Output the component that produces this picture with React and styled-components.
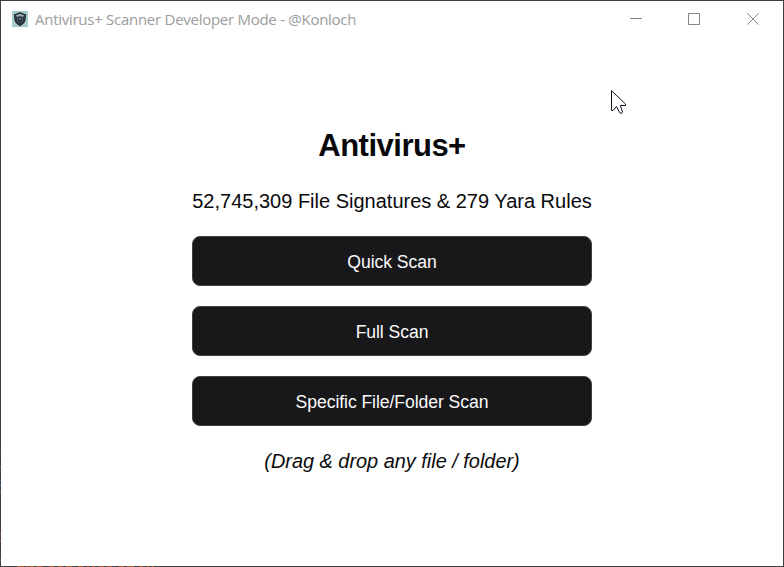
import React from "react";
import styled, { createGlobalStyle } from "styled-components";

const GlobalStyle = createGlobalStyle`
  * { box-sizing: border-box; }
  body { margin: 0; background: #fff; overflow: hidden; }
`;

const Window = styled.div`
  position: relative;
  display: flex;
  flex-direction: column;
  width: 784px;
  height: 567px;
  border: 1px solid #3f3f41;
  background: #fff;
  color: #09090b;
  font-family: "Liberation Sans", Arial, sans-serif;
`;

const TitleBar = styled.header`
  display: flex;
  align-items: center;
  height: 36px;
  padding: 0 1px 0 11px;
  flex: none;
`;

const WindowTitle = styled.span`
  margin-left: 7px;
  flex: 1;
  font: 400 15px/20px "Open Sans", sans-serif;
  letter-spacing: -0.27px;
  color: #9c9c9c;
  white-space: nowrap;
`;

const WindowControl = styled.button`
  display: grid;
  place-items: center;
  width: 58.5px;
  height: 36px;
  padding: 0;
  border: 0;
  background: transparent;
`;

const Content = styled.main`
  display: flex;
  flex-direction: column;
  align-items: center;
  width: 400px;
  margin: 89px auto 0;
`;

const Heading = styled.h1`
  margin: 0;
  font-size: 31px;
  letter-spacing: -0.5px;
  line-height: 40px;
  white-space: nowrap;
`;

const Summary = styled.p`
  margin: 22px 0;
  font-size: 20px;
  line-height: 26px;
  white-space: nowrap;
`;

const Actions = styled.div`
  display: grid;
  gap: 20px;
  width: 100%;
`;

const ScanButton = styled.button`
  height: 50px;
  padding: 1px 0 0;
  border: 1px solid #414143;
  border-radius: 8px;
  background: #18181b;
  color: #fafafa;
  font: 17.6px/20px "Liberation Sans", Arial, sans-serif;
  letter-spacing: -0.07px;
`;

const DropHint = styled.p`
  margin: 22px 0 0;
  font-size: 19.9px;
  font-style: italic;
  line-height: 26px;
  white-space: nowrap;
`;

const Pointer = styled.svg`
  position: absolute;
  left: 610px;
  top: 89px;
`;

const EdgeGlints = styled.svg`
  position: absolute;
  left: -1px;
  top: -1px;
  pointer-events: none;
`;

const blueGlints = [[455, 1], [466, 2], [480, 1], [485, 2], [491, 2]];
const redGlints = [[17, 7], [26, 2], [29, 5], [36, 7], [49, 5], [58, 5], [66, 6], [78, 5], [87, 2], [92, 3], [99, 5], [107, 5], [119, 5], [127, 7], [139, 4], [147, 2], [152, 2]];

function ShieldIcon() {
  return (
    <svg width="16" height="16" viewBox="0 0 16 16">
      <rect width="16" height="16" fill="#a5cccd" />
      <path d="M8 1 10 2 14 3.2 13.7 8.5Q13 12.5 8 15.2 3 12.5 2.3 8.5L2 3.2 6 2Z" fill="#20272d" />
      <path d="M8 2.6 12.6 4.3 12.2 8.4Q11.5 11.5 8 13.6 4.5 11.5 3.8 8.4L3.4 4.3Z" fill="#252c33" stroke="#4a545b" strokeWidth=".5" />
      <path d="M8 2.8 12.2 4.4 11 6 8 4.7 5 6 3.8 4.4Z" fill="#a3adb1" />
      <path d="m8 5.3 2.5 1.5v2.8L8 11.5 5.5 9.6V6.8Z" fill="#202c37" stroke="#607887" strokeWidth=".7" />
      <circle cx="8" cy="8" r="1.2" fill="#557487" />
    </svg>
  );
}

function ControlIcon({ kind }) {
  return (
    <svg width="12" height="12" viewBox="0 0 12 12" fill="none" stroke="#858585">
      {kind === "minimize" && <path d="M0 5.5h12" />}
      {kind === "maximize" && <path d="M.5.5h11v11H.5z" />}
      {kind === "close" && <path d="m.3.3 11.4 11.4M11.7.3.3 11.7" />}
    </svg>
  );
}

export default function App() {
  return (
    <>
      <GlobalStyle />
      <Window>
        <TitleBar>
          <ShieldIcon />
          <WindowTitle>Antivirus+ Scanner Developer Mode - @Konloch</WindowTitle>
          <WindowControl aria-label="Minimize"><ControlIcon kind="minimize" /></WindowControl>
          <WindowControl aria-label="Maximize"><ControlIcon kind="maximize" /></WindowControl>
          <WindowControl aria-label="Close"><ControlIcon kind="close" /></WindowControl>
        </TitleBar>
        <Content>
          <Heading>Antivirus+</Heading>
          <Summary>52,745,309 File Signatures &amp; 279 Yara Rules</Summary>
          <Actions>
            <ScanButton>Quick Scan</ScanButton>
            <ScanButton>Full Scan</ScanButton>
            <ScanButton>Specific File/Folder Scan</ScanButton>
          </Actions>
          <DropHint>(Drag &amp; drop any file / folder)</DropHint>
        </Content>
        <Pointer width="17" height="26" viewBox="0 0 17 26" aria-hidden="true">
          <path d="M.5.7V20.5H2L5.5 16.5 8.5 22.5 10.5 23.5 11.5 22 9.5 16V15.5H14.5V14Z" fill="#fff" stroke="#10101c" />
        </Pointer>
        <EdgeGlints width="784" height="567" aria-hidden="true">
          {blueGlints.map(([y, h]) => <rect key={y} x="0" y={y} width="1" height={h} fill="#386489" />)}
          {[533, 540, 559].map((y) => <rect key={y} x="0" y={y} width="1" height="2" fill="#94513c" />)}
          {redGlints.map(([x, w]) => <rect key={x} x={x} y="566" width={w} height="1" fill="#a95736" />)}
        </EdgeGlints>
      </Window>
    </>
  );
}
